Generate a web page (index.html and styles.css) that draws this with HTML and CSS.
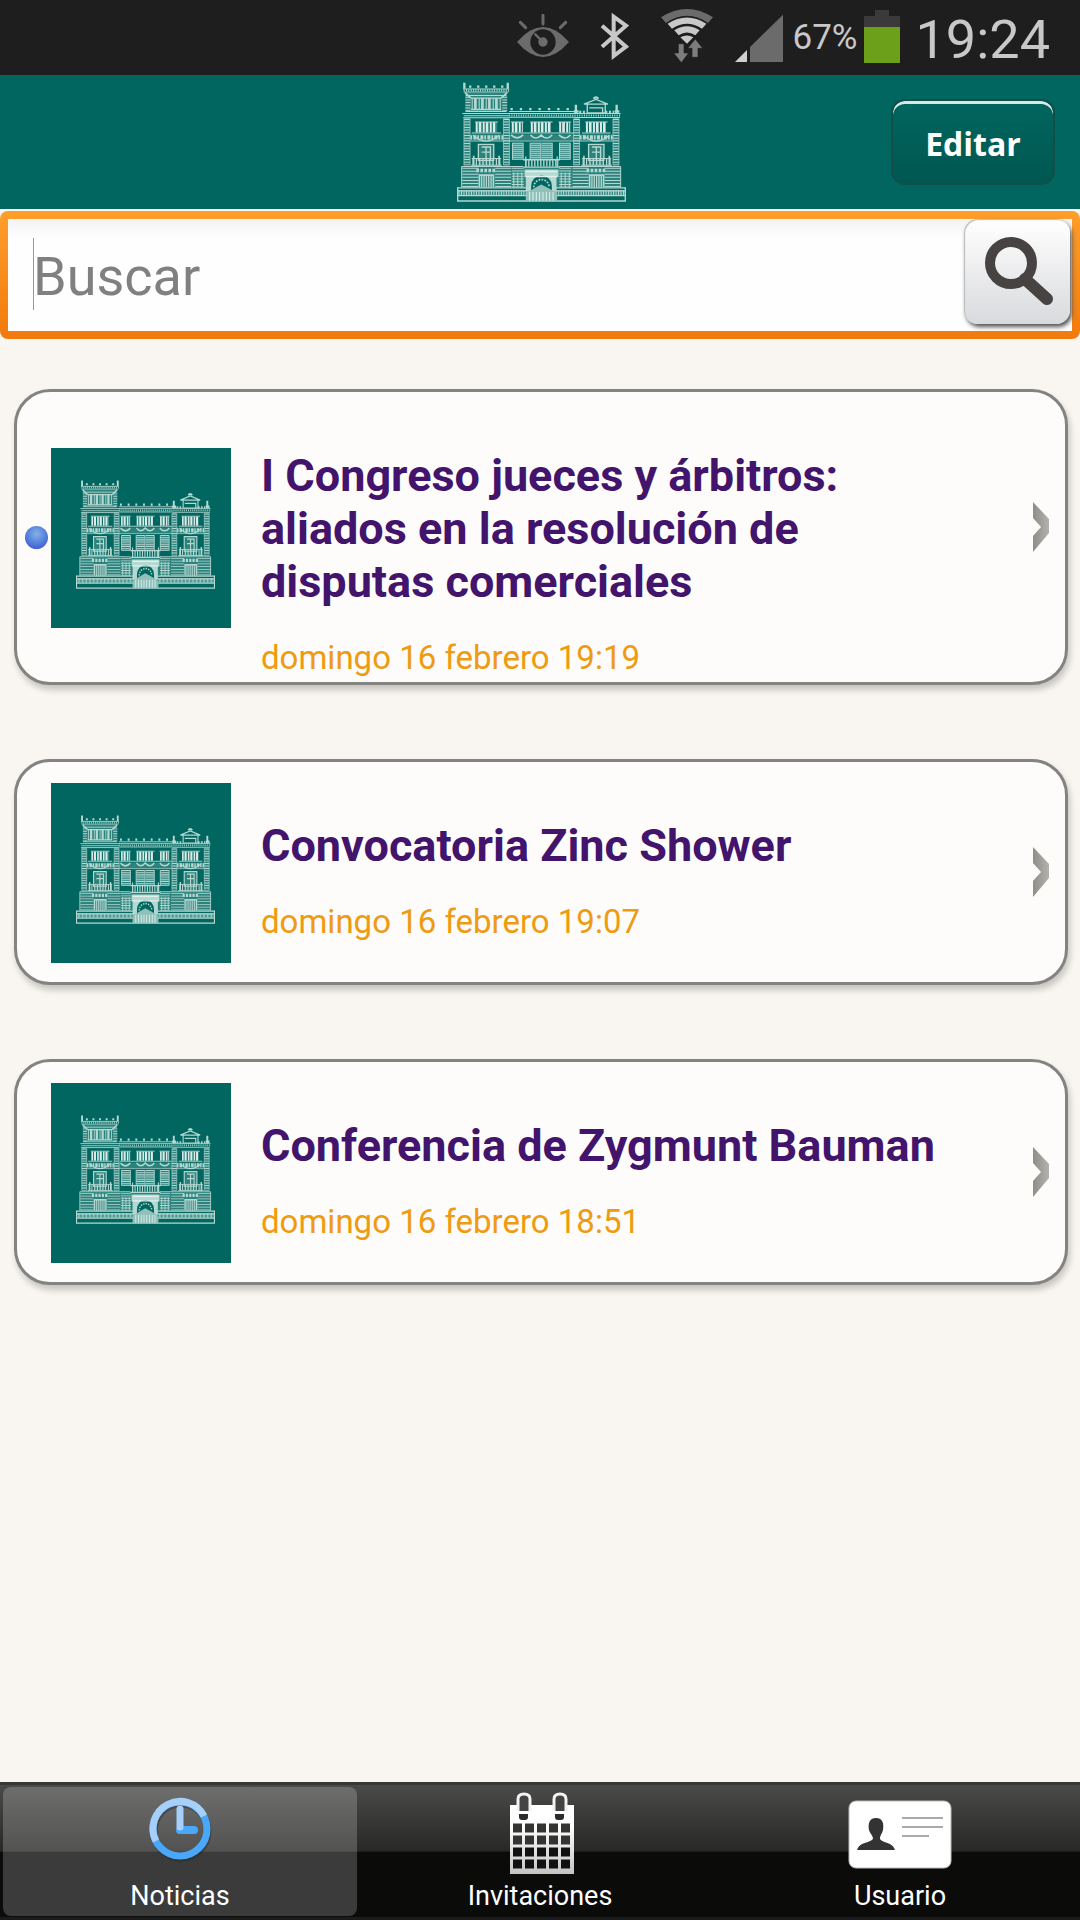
FILE: index.html
```html
<!DOCTYPE html>
<html lang="es">
<head>
<meta charset="utf-8">
<meta name="viewport" content="width=device-width, initial-scale=1">
<title>Noticias</title>
<link rel="stylesheet" href="styles.css">
</head>
<body>
<svg class="defs" aria-hidden="true">
  <symbol id="palace" viewBox="52 36 506 358" preserveAspectRatio="none">
    <g fill="#b4d8d2" fill-opacity=".25">
      <path d="M76 68H202V124H76ZM72 143H92V286H72ZM191 143H209V286H191ZM401 143H419V286H401ZM519 143H537V286H519ZM94 192H518V214H94ZM66 290H542V350H66Z"/>
      <path d="M218 217H250V268H218ZM271 217H337V268H271ZM359 217H391V268H359ZM116 222H162V284H116ZM446 222H492V284H446Z"/>
    </g>
    <g fill="none" stroke="#b4d8d2" stroke-width="3">
      <!-- tower -->
      <path d="M74 38V56M204 38V56" stroke-width="7"/>
      <path d="M88 50H196" stroke-width="7" stroke-dasharray="7 17"/>
      <path d="M70 57H208M72 66H206M78 76H200M78 124H200M68 130H210M72 137H208"/>
      <path d="M72 61H208" stroke-width="6" stroke-dasharray="3 4"/>
      <path d="M76 68L94 84M202 68L184 84" stroke-width="5"/>
      <path d="M94 84H184M94 118H184" stroke-width="4"/>
      <path d="M96 101H184" stroke-width="34" stroke-dasharray="3 4 8 6"/>
      <path d="M85 80V124M195 80V124" stroke-width="15" stroke-dasharray="3 5"/>
      <!-- cornice -->
      <path d="M212 117H400" stroke-width="7" stroke-dasharray="7 21"/>
      <path d="M208 124H404M208 130H404M208 141H404M404 130H542M404 142H540M70 143H208"/>
      <path d="M208 136H540" stroke-width="6" stroke-dasharray="3 4"/>
      <path d="M408 104V130M530 104V130" stroke-width="7"/>
      <path d="M402 124H416M524 124H538" stroke-width="8"/>
      <path d="M418 126H440M496 126H522" stroke-width="8" stroke-dasharray="6 5"/>
      <path d="M432 102L468 88L504 102Z M442 102V128H496V102M448 113H488V128" stroke-width="4"/>
      <path d="M461 86A8 8 0 0 1 475 86" stroke-width="6"/>
      <!-- pilasters -->
      <path d="M82 146V284M200 146V284M410 146V284M528 146V284" stroke-width="17" stroke-dasharray="3 5"/>
      <path d="M73 146V284M91 146V284M191 146V284M209 146V284M401 146V284M419 146V284M519 146V284M537 146V284" stroke-width="2"/>
      <!-- second floor windows -->
      <path d="M108 171H172M216 171H249M273 171H336M358 171H391M438 171H501" stroke="#d9ece8" stroke-width="31" stroke-dasharray="6 3 8 4"/>
      <path d="M106 155H174M214 155H251M271 155H338M356 155H393M436 155H503M96 188H184M212 188H400M426 188H512"/>
      <path d="M214 194Q232 212 250 194M272 194Q288 212 304 194Q320 212 337 194M357 194Q375 212 392 194" stroke-width="5"/>
      <path d="M92 201H190M420 201H518" stroke-width="13" stroke-dasharray="5 4 9 3"/>
      <path d="M100 195Q139 230 178 195M430 195Q469 230 508 195" stroke-width="4"/>
      <path d="M92 212H518" stroke-width="2"/>
      <!-- first floor -->
      <path d="M234 217V268M287 217V268M321 217V268M375 217V268" stroke-width="30" stroke-dasharray="3 3"/>
      <path d="M218 217V268M250 217V268M271 217V268M303 217V268M337 217V268M359 217V268M391 217V268" stroke-width="3"/>
      <path d="M116 222H162V270H116ZM126 230H152V270M139 230V270M126 245H152M446 222H492V270H446ZM456 230H482V270M469 230V270M456 245H482" stroke-width="4"/>
      <path d="M98 274H182M428 274H512" stroke-width="20" stroke-dasharray="4 6"/>
      <path d="M96 264H184M94 284H186M426 264H514M424 284H516M66 288H250M358 288H542"/>
      <path d="M102 256V284M178 256V284M432 256V284M508 256V284" stroke-width="5"/>
      <path d="M256 278H356" stroke-width="20" stroke-dasharray="4 5"/>
      <path d="M250 268H360M250 290H360M258 258V290M352 258V290" stroke-width="4"/>
      <!-- ground floor -->
      <path d="M92 292V350M190 292V350M422 292V350M518 292V350" stroke-width="48" stroke-dasharray="3 6"/>
      <path d="M234 292V350M376 292V350" stroke-width="36" stroke-dasharray="3 5"/>
      <path d="M222 306V350M234 306V350M246 306V350M364 306V350M376 306V350M388 306V350M66 288V350M542 288V350"/>
      <path d="M119 350V314H161V350M449 350V314H491V350" stroke-width="5"/>
      <path d="M124 333H158M454 333H488" stroke-width="36" stroke-dasharray="4 3"/>
      <path d="M110 300H170M440 300H500" stroke-width="11" stroke-dasharray="8 4"/>
      <path d="M54 352H556M54 361H556" stroke-width="4"/>
      <path d="M54 366H556" stroke-width="15" stroke-dasharray="3 2"/>
      <path d="M53 375H557M54 350V391H556V350" stroke-width="4"/>
    </g>
    <path d="M254 297H356V320H350V362H258V320H254Z" fill="#b4d8d2"/>
    <path d="M274 362V346A30 30 0 0 1 336 346V362Z" fill="#00665f"/>
    <path d="M282 350A23 23 0 0 1 328 350" fill="none" stroke="#b4d8d2" stroke-width="5" stroke-dasharray="5 4"/>
    <path d="M258 392V368L282 354L304 342L328 354L352 368V392Z" fill="#8fc0b9"/>
    <path d="M268 377H344" stroke="#e0f0ed" stroke-width="26" stroke-dasharray="3 7"/>
    <path d="M258 303H352M258 318H352" stroke="#dff0ed" stroke-width="4"/>
  </symbol>
  <symbol id="chevron" viewBox="0 0 16 50">
    <path d="M0 0L16 17V31L0 50V34L8 25L0 16Z" fill="url(#chevron-fill)"/>
  </symbol>
  <linearGradient id="chevron-fill" x1="0" x2="1" y1="0" y2="0"><stop offset="0" stop-color="#8e8e89"/><stop offset="1" stop-color="#b3b2ac"/></linearGradient>
  <linearGradient id="paper" x1="0" x2="0" y1="0" y2="1"><stop offset=".3" stop-color="#fff"/><stop offset="1" stop-color="#c4c4c4"/></linearGradient>
</svg>

<div class="status">
  <svg width="54" height="75" viewBox="51 0 162 225" fill="none" stroke="#6b6b6b" stroke-width="9" stroke-linecap="round" aria-hidden="true">
    <path d="M132 46V72M64 67L80 83M200 67L184 83"/>
    <path d="M54 126Q132 36 210 126Q132 216 54 126Z" fill="#6b6b6b" stroke="none"/>
    <circle cx="132" cy="126" r="38" fill="#1e1e1e" stroke="none"/>
    <circle cx="132" cy="126" r="14" fill="#6b6b6b" stroke="none"/>
    <path d="M109 103L130 124" stroke-width="7"/>
  </svg>
  <svg width="30" height="75" viewBox="306 0 90 225" fill="none" stroke="#c8c8c8" stroke-width="12" aria-hidden="true">
    <path d="M312 77L384 140L347 168V50L384 77L312 140"/>
  </svg>
  <svg width="54" height="75" viewBox="480 0 162 225" aria-hidden="true">
    <path d="M483 52Q561 2 639 52L624 69Q561 26 498 69Z" fill="#6b6b6b"/>
    <g fill="#c8c8c8"><path d="M503 71Q561 34 619 71L606 86Q561 56 516 86Z"/><path d="M523 91Q561 67 599 91L586 106Q561 89 536 106Z"/><path d="M541 112Q561 101 580 112L561 131Z"/></g>
    <g fill="#7d7d7d" stroke="#1e1e1e" stroke-width="2"><path d="M535 131H552V159H566L544 188L521 159H535Z"/><path d="M576 172H594V145H608L586 117L563 145H576Z"/></g>
  </svg>
  <svg class="signal" width="50" height="75" viewBox="702 0 150 225" aria-hidden="true">
    <path d="M705 186L741 150V186Z" fill="#d0d0d0"/><path d="M750 141L849 44V186H750Z" fill="#6b6b6b"/>
  </svg>
  <span class="percent">67%</span>
  <svg class="battery" width="36" height="75" viewBox="0 0 36 75" aria-hidden="true">
    <path d="M11 10H25V16H36V27H0V16H11Z" fill="#3a3a3a"/><path d="M0 27H36V63H0Z" fill="#6ca01a"/>
  </svg>
  <time class="clock">19:24</time>
</div>

<header class="header">
  <svg class="logo" role="img" aria-label="Logotipo"><use href="#palace"/></svg>
  <button class="edit" type="button">Editar</button>
</header>

<form class="search" role="search">
  <span class="caret"></span>
  <input class="search-input" type="text" placeholder="Buscar" aria-label="Buscar">
  <button class="search-button" type="button" aria-label="Buscar">
    <svg width="106" height="105" viewBox="0 0 106 105" fill="none" stroke="#484343" aria-hidden="true">
      <path d="M61 60L83 80" stroke-width="12" stroke-linecap="round"/><circle cx="47" cy="44" r="21" stroke-width="10"/>
    </svg>
  </button>
</form>

<main class="list">
  <a class="card card-unread" href="#">
    <span class="gutter"><span class="dot"></span></span>
    <span class="thumb"><svg class="thumb-art" aria-hidden="true"><use href="#palace"/></svg></span>
    <span class="text"><strong class="title">I Congreso jueces y árbitros: aliados en la resolución de disputas comerciales</strong><span class="date">domingo 16 febrero 19:19</span></span>
    <svg class="chevron" aria-hidden="true"><use href="#chevron"/></svg>
  </a>
  <a class="card" href="#">
    <span class="gutter"></span>
    <span class="thumb"><svg class="thumb-art" aria-hidden="true"><use href="#palace"/></svg></span>
    <span class="text"><strong class="title">Convocatoria Zinc Shower</strong><span class="date">domingo 16 febrero 19:07</span></span>
    <svg class="chevron" aria-hidden="true"><use href="#chevron"/></svg>
  </a>
  <a class="card" href="#">
    <span class="gutter"></span>
    <span class="thumb"><svg class="thumb-art" aria-hidden="true"><use href="#palace"/></svg></span>
    <span class="text"><strong class="title">Conferencia de Zygmunt Bauman</strong><span class="date">domingo 16 febrero 18:51</span></span>
    <svg class="chevron" aria-hidden="true"><use href="#chevron"/></svg>
  </a>
</main>

<nav class="tabs">
  <a class="tab tab-active" href="#">
    <svg class="tab-icon" width="68" height="84" viewBox="0 0 68 84" fill="none" aria-hidden="true">
      <circle cx="35" cy="40" r="27" stroke="#222" stroke-opacity=".4" stroke-width="7"/>
      <circle cx="34" cy="38" r="27" stroke="#4aa8fa" stroke-width="7"/>
      <path d="M10 50A27 27 0 0 1 58 25" stroke="#a6d0fa" stroke-width="7"/>
      <path d="M34 39H48" stroke="#4aa8fa" stroke-width="8" stroke-linecap="round"/>
      <path d="M34 18V36" stroke="#a6d0fa" stroke-width="7" stroke-linecap="round"/>
    </svg>
    <span>Noticias</span>
  </a>
  <a class="tab" href="#">
    <svg class="tab-icon" width="68" height="84" viewBox="-4 0 68 84" aria-hidden="true">
      <path d="M0 14H64V83H0Z" fill="url(#paper)"/>
      <g fill="#2c2c2b"><path d="M8 14H20V20H8ZM44 14H56V20H44ZM9 23H18V26Q18 29 15 29H12Q9 29 9 26ZM45 23H54V26Q54 29 51 29H48Q45 29 45 26Z"/></g>
      <path d="M8 20V8Q8 3 14 3T20 8V20M44 20V8Q44 3 50 3T56 8V20" fill="#444" stroke="#f2f2f2" stroke-width="3"/>
      <g stroke-width="9" stroke-dasharray="9 3"><path d="M3 37H62M3 49H62" stroke="#343433"/><path d="M3 61H62M3 73H62" stroke="#111"/></g>
    </svg>
    <span>Invitaciones</span>
  </a>
  <a class="tab" href="#">
    <svg class="tab-icon" width="104" height="84" viewBox="0 0 104 84" aria-hidden="true">
      <rect x="1" y="10" width="102" height="67" rx="7" fill="#fff" stroke="#bbb"/>
      <path d="M28 27C35 27 36 33 35 39C34 43 32 44 32 48C34 52 45 51 47 59H9C11 51 22 52 25 48C25 44 22 43 21 39C20 33 21 27 28 27Z" fill="#333"/>
      <path d="M54 27H95M54 36H95M54 45H81" stroke="#aaa" stroke-width="2"/>
    </svg>
    <span>Usuario</span>
  </a>
</nav>
</body>
</html>
```
FILE: styles.css
```css
* { box-sizing: border-box; }

body {
  margin: 0;
  min-height: 100vh;
  display: flex;
  flex-direction: column;
  background: #f9f6f1;
  font-family: Roboto, "Liberation Sans", sans-serif;
}

a { color: inherit; text-decoration: none; }
svg { display: block; flex: none; }
.defs { position: absolute; width: 0; height: 0; }

.status {
  display: flex;
  justify-content: flex-end;
  align-items: center;
  gap: 30px;
  height: 75px;
  padding-right: 30px;
  background: #1e1e1e;
  color: #c8c8c8;
}
.signal { margin-left: -10px; }
.percent { margin-left: -21px; font-size: 35px; }
.battery { margin-left: -24px; }
.clock { margin-left: -14px; padding-top: 3px; font-size: 54px; }

.header {
  display: grid;
  grid-template-columns: 1fr auto 1fr;
  align-items: center;
  height: 134px;
  padding: 0 25px 0 28px;
  background: #00665f;
}
.logo { grid-column: 2; width: 169px; height: 120px; }
.edit {
  justify-self: end;
  width: 164px;
  height: 86px;
  padding: 3px 0 0;
  border: 2px solid #124f4b;
  border-radius: 14px;
  background: linear-gradient(#00665f, #005751);
  box-shadow: inset 0 3px 0 #d5eae7;
  color: #fff;
  font: bold 32px "Open Sans", sans-serif;
}

.search {
  display: flex;
  align-items: flex-start;
  margin-top: 2px;
  height: 128px;
  padding: 8px 10px 8px 33px;
  border-radius: 8px;
  background:
    linear-gradient(#f3f3f3, #fefefe 20px) 8px 8px / calc(100% - 16px) calc(100% - 16px) no-repeat,
    linear-gradient(#fd9e2b, #f27a0c);
}
.caret { width: 1px; height: 72px; margin-top: 19px; background: #999; }
.search-input {
  flex: 1;
  min-width: 0;
  height: 112px;
  margin-left: -1px;
  padding: 2px 0 0;
  border: 0;
  outline: 0;
  background: none;
  font: 54px Roboto, sans-serif;
}
.search-input::placeholder { color: #808080; opacity: 1; }
.search-button {
  width: 106px;
  height: 105px;
  padding: 0;
  border: 0;
  border-radius: 14px;
  background: linear-gradient(#fff, #d9dadd);
  box-shadow: inset 1px 1px 1px #bbb, 2px 3px 4px #555;
}

.list { display: grid; gap: 74px; padding: 50px 12px 50px 14px; }
.card {
  display: flex;
  align-items: center;
  padding-right: 16px;
  border: 3px solid #83837f;
  border-radius: 36px;
  background: #fdfcfb;
  box-shadow: 2px 5px 6px rgba(0, 0, 0, .2);
}
.gutter { width: 34px; padding-left: 8px; }
.dot {
  display: block;
  width: 23px;
  height: 23px;
  border-radius: 50%;
  background: radial-gradient(circle at 50% 35%, #86b0e8, #5480dc 50%, #3848c8);
}
.thumb {
  flex: none;
  width: 180px;
  height: 180px;
  margin: 21px 30px 19px 0;
  padding: 32px 16px 0 25px;
  background: #00665f;
}
.thumb-art { width: 139px; height: 109px; }
.text {
  flex: 1;
  align-self: flex-start;
  display: grid;
  gap: 31px;
  padding: 57px 60px 5px 0;
}
.title { color: #43146c; font-size: 45px; line-height: 53px; }
.date { color: #ef9b12; font-size: 33px; line-height: 38px; }
.chevron { width: 16px; height: 50px; }
.card-unread .chevron { margin-bottom: 20px; }

.tabs {
  display: flex;
  margin-top: auto;
  height: 138px;
  border-top: 3px solid #383838;
  border-bottom: 3px solid #1b1b1b;
  background: linear-gradient(#4a4a49, #282827 50%, #0b0b0a 51%);
}
.tab {
  flex: 1;
  display: flex;
  flex-direction: column;
  align-items: center;
  gap: 4px;
  margin: 2px 3px 1px;
  padding-top: 4px;
  border-radius: 8px;
  color: #fff;
  font-size: 27px;
  line-height: 34px;
}
.tab-active { background: rgba(255, 255, 255, .2); }
```
